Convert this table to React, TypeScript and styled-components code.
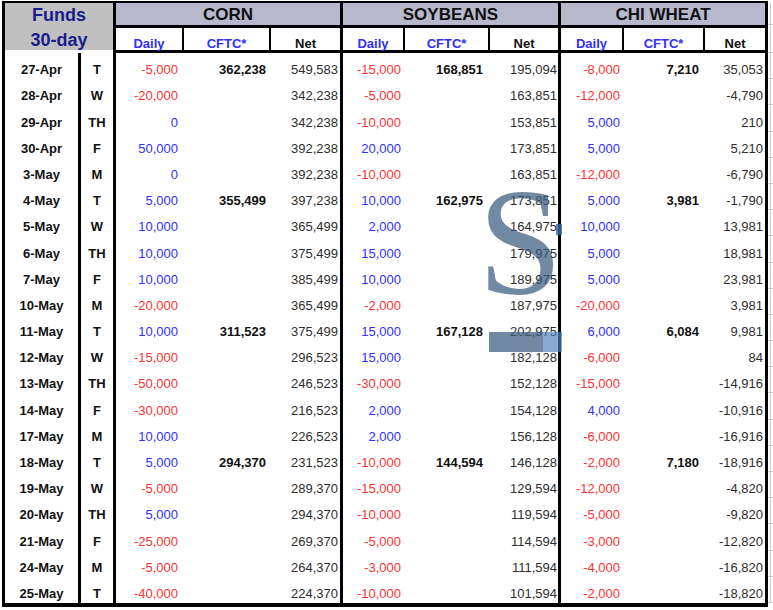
import React from "react";
import styled, { createGlobalStyle } from "styled-components";

type Tone = "red" | "blue" | "black" | "gray";

const toneColor: Record<Tone, string> = {
  red: "#ff3333",
  blue: "#3030ff",
  black: "#111111",
  gray: "#2e2e2e",
};

const Global = createGlobalStyle`
  html, body { margin: 0; padding: 0; background: #ffffff; }
  body { font-family: "Liberation Sans", Arial, sans-serif; }
`;

const Page = styled.div`
  position: relative;
  display: flex;
  align-items: flex-start;
  width: 773px;
  height: 610px;
  overflow: hidden;
  background: #ffffff;
`;

const Sheet = styled.div`
  margin: 1px 0 0 2px;
  display: grid;
  grid-template-columns: 73px 35px 69px 87px 71px 63px 85px 70px 64px 81px 62px;
  grid-template-rows: 22px 28px repeat(21, 1fr);
  height: 600px;
  border-top: 2px solid #000;
  border-left: 3px solid #000;
  border-right: 3px solid #000;
  border-bottom: 4px solid #000;
  font-family: "Liberation Sans", Arial, sans-serif;
`;

const FundsCell = styled.div`
  grid-column: 1 / span 2;
  grid-row: 1 / span 2;
  margin-bottom: 3px;
  background: #c0c0c0;
  color: #1b1b8c;
  font-weight: bold;
  font-size: 18px;
  line-height: 25px;
  text-align: center;
`;

const Band = styled.div`
  grid-column: span 3;
  background: #b8b8cc;
  border-left: 3px solid #000;
  display: flex;
  align-items: center;
  justify-content: center;
  padding-top: 2px;
  font-size: 17px;
  font-weight: bold;
  color: #111;
`;

const SubHead = styled.div<{ $group: boolean; $tone: Tone }>`
  border-top: 3px solid #000;
  border-bottom: 3px solid #000;
  border-left: ${(p) => (p.$group ? "3px" : "2px")} solid #000;
  display: flex;
  align-items: flex-end;
  justify-content: center;
  font-size: 13px;
  line-height: 13px;
  font-weight: bold;
  color: ${(p) => toneColor[p.$tone]};
  background: #fff;
`;

const DateCell = styled.div`
  display: flex;
  align-items: flex-end;
  justify-content: center;
  padding-bottom: 3px;
  font-size: 13px;
  line-height: 13px;
  font-weight: bold;
  color: #111;
`;

const DayCell = styled(DateCell)`
  border-left: 3px solid #000;
`;

const NumCell = styled.div<{ $tone: Tone; $pad: number; $group: boolean; $bold: boolean }>`
  display: flex;
  align-items: flex-end;
  justify-content: flex-end;
  padding: 0 ${(p) => p.$pad}px 3px 0;
  border-left: ${(p) => (p.$group ? "3px solid #000" : "none")};
  font-size: 13px;
  line-height: 13px;
  font-weight: ${(p) => (p.$bold ? "bold" : "normal")};
  color: ${(p) => toneColor[p.$tone]};
`;

const EdgeStrip = styled.div`
  margin-top: 3px;
  width: 5px;
  height: 600px;
  display: grid;
  grid-template-rows: 22px 28px repeat(21, 1fr);
  background: linear-gradient(
    to right,
    transparent 2px,
    #c9c9c9 2px,
    #c9c9c9 3px,
    transparent 3px
  );
`;

const EdgeTick = styled.div`
  border-bottom: 1px solid #cfcfcf;
`;

const Watermark = styled.div`
  position: absolute;
  left: 478px;
  top: 167px;
  font-family: "Liberation Serif", "Times New Roman", serif;
  font-size: 152px;
  line-height: 1;
  color: rgba(58, 92, 128, 0.72);
  pointer-events: none;
`;

const WatermarkBar = styled.div`
  position: absolute;
  left: 489px;
  top: 332px;
  width: 73px;
  height: 20px;
  background: linear-gradient(
    to right,
    rgba(58, 92, 128, 0.72) 0,
    rgba(58, 92, 128, 0.72) 54px,
    rgba(80, 130, 190, 0.68) 54px
  );
  pointer-events: none;
`;

const WatermarkNotch = styled.div`
  position: absolute;
  left: 556px;
  top: 224px;
  width: 6px;
  height: 11px;
  background: rgba(60, 100, 160, 0.8);
  pointer-events: none;
`;

type Row = [string, string, ...(number | null)[]];

const rows: Row[] = [
  ["27-Apr", "T", -5000, 362238, 549583, -15000, 168851, 195094, -8000, 7210, 35053],
  ["28-Apr", "W", -20000, null, 342238, -5000, null, 163851, -12000, null, -4790],
  ["29-Apr", "TH", 0, null, 342238, -10000, null, 153851, 5000, null, 210],
  ["30-Apr", "F", 50000, null, 392238, 20000, null, 173851, 5000, null, 5210],
  ["3-May", "M", 0, null, 392238, -10000, null, 163851, -12000, null, -6790],
  ["4-May", "T", 5000, 355499, 397238, 10000, 162975, 173851, 5000, 3981, -1790],
  ["5-May", "W", 10000, null, 365499, 2000, null, 164975, 10000, null, 13981],
  ["6-May", "TH", 10000, null, 375499, 15000, null, 179975, 5000, null, 18981],
  ["7-May", "F", 10000, null, 385499, 10000, null, 189975, 5000, null, 23981],
  ["10-May", "M", -20000, null, 365499, -2000, null, 187975, -20000, null, 3981],
  ["11-May", "T", 10000, 311523, 375499, 15000, 167128, 202975, 6000, 6084, 9981],
  ["12-May", "W", -15000, null, 296523, 15000, null, 182128, -6000, null, 84],
  ["13-May", "TH", -50000, null, 246523, -30000, null, 152128, -15000, null, -14916],
  ["14-May", "F", -30000, null, 216523, 2000, null, 154128, 4000, null, -10916],
  ["17-May", "M", 10000, null, 226523, 2000, null, 156128, -6000, null, -16916],
  ["18-May", "T", 5000, 294370, 231523, -10000, 144594, 146128, -2000, 7180, -18916],
  ["19-May", "W", -5000, null, 289370, -15000, null, 129594, -12000, null, -4820],
  ["20-May", "TH", 5000, null, 294370, -10000, null, 119594, -5000, null, -9820],
  ["21-May", "F", -25000, null, 269370, -5000, null, 114594, -3000, null, -12820],
  ["24-May", "M", -5000, null, 264370, -3000, null, 111594, -4000, null, -16820],
  ["25-May", "T", -40000, null, 224370, -10000, null, 101594, -2000, null, -18820],
];

type Kind = "daily" | "cftc" | "net";
const columns: { kind: Kind; pad: number }[] = [
  { kind: "daily", pad: 4 },
  { kind: "cftc", pad: 3 },
  { kind: "net", pad: 2 },
  { kind: "daily", pad: 2 },
  { kind: "cftc", pad: 5 },
  { kind: "net", pad: 1 },
  { kind: "daily", pad: 2 },
  { kind: "cftc", pad: 4 },
  { kind: "net", pad: 2 },
];

const groups = ["CORN", "SOYBEANS", "CHI WHEAT"];
const subLabels: { label: string; tone: Tone }[] = [
  { label: "Daily", tone: "blue" },
  { label: "CFTC*", tone: "blue" },
  { label: "Net", tone: "black" },
];

const fmt = (n: number) => n.toLocaleString("en-US");

const toneFor = (kind: Kind, v: number): Tone => {
  if (kind === "daily") return v < 0 ? "red" : "blue";
  if (kind === "cftc") return "black";
  return "gray";
};

export default function App() {
  return (
    <>
      <Global />
      <Page>
        <Sheet>
          <FundsCell>
            Funds
            <br />
            30-day
          </FundsCell>
          {groups.map((g) => (
            <Band key={g}>{g}</Band>
          ))}
          {groups.map((g) =>
            subLabels.map((s, i) => (
              <SubHead key={g + s.label} $group={i === 0} $tone={s.tone}>
                {s.label}
              </SubHead>
            ))
          )}
          {rows.map((r) => {
            const [date, day, ...vals] = r;
            return (
              <React.Fragment key={date}>
                <DateCell>{date}</DateCell>
                <DayCell>{day}</DayCell>
                {vals.map((v, i) => {
                  const col = columns[i];
                  return (
                    <NumCell
                      key={i}
                      $pad={col.pad}
                      $group={col.kind === "daily"}
                      $bold={col.kind === "cftc"}
                      $tone={v === null ? "black" : toneFor(col.kind, v)}
                    >
                      {v === null ? "" : fmt(v)}
                    </NumCell>
                  );
                })}
              </React.Fragment>
            );
          })}
        </Sheet>
        <EdgeStrip>
          {Array.from({ length: 23 }).map((_, i) => (
            <EdgeTick key={i} />
          ))}
        </EdgeStrip>
        <Watermark>S</Watermark>
        <WatermarkBar />
        <WatermarkNotch />
      </Page>
    </>
  );
}
